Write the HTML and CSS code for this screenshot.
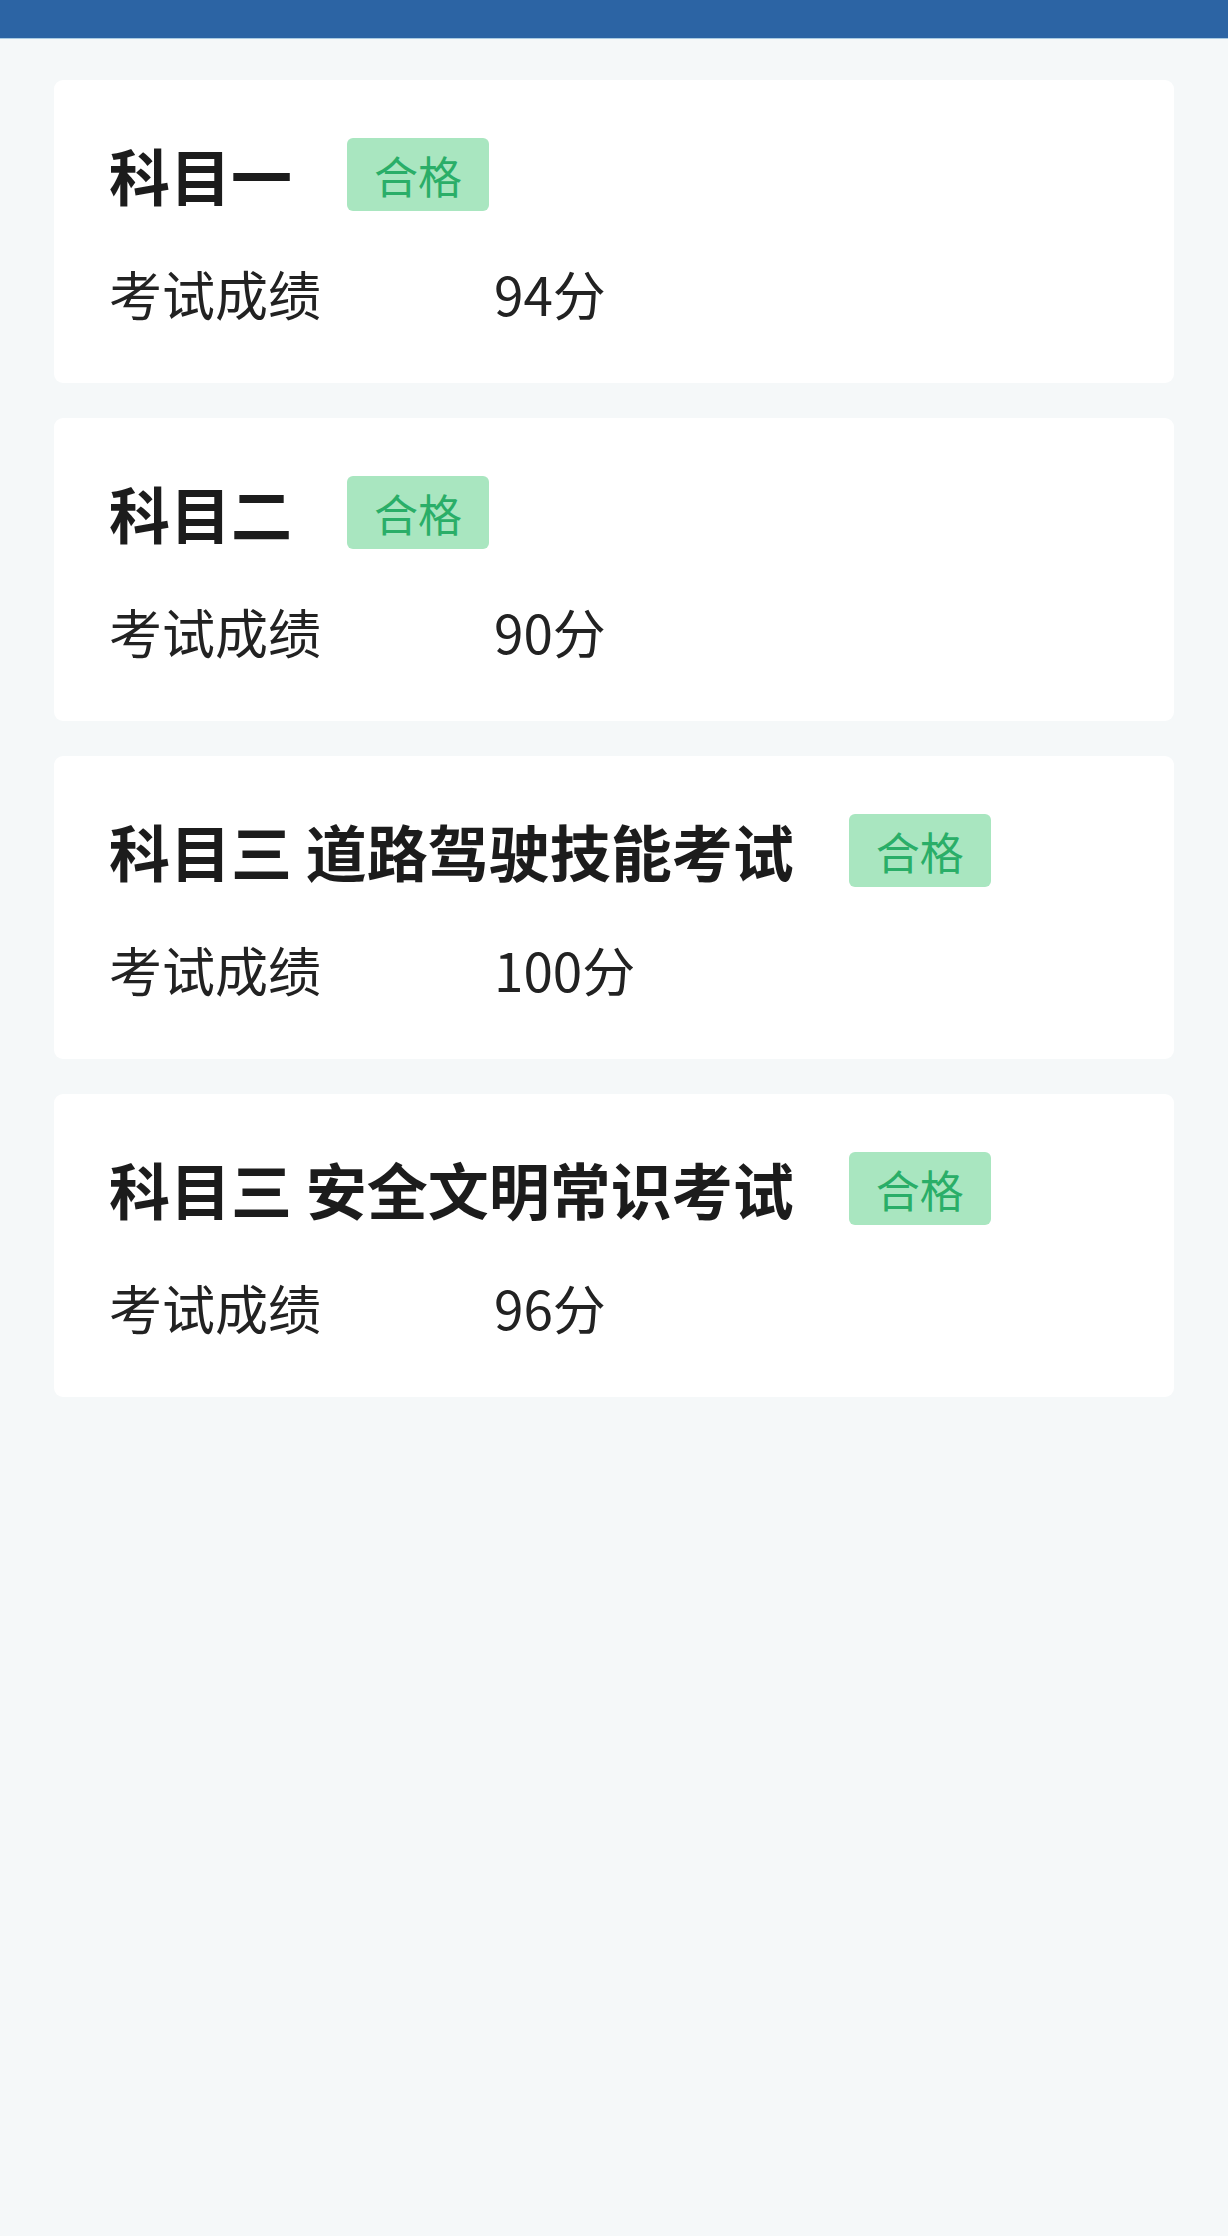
FILE: index.html
```html
<!DOCTYPE html>
<html lang="zh-CN">

<head>
    <meta charset="UTF-8">
    <meta name="viewport" content="width=device-width, initial-scale=1.0">
    <title>考试成绩</title>
    <link rel="stylesheet" href="styles.css">
</head>

<body>
    <div class="top-bar"></div>
    <div class="list">
        <div class="card">
            <div class="card-title">
                <span class="subject">科目一</span>
                <span class="tag">合格</span>
            </div>
            <div class="score-row">
                <span class="label">考试成绩</span>
                <span class="value">94分</span>
            </div>
        </div>
        <div class="card">
            <div class="card-title">
                <span class="subject">科目二</span>
                <span class="tag">合格</span>
            </div>
            <div class="score-row">
                <span class="label">考试成绩</span>
                <span class="value">90分</span>
            </div>
        </div>
        <div class="card">
            <div class="card-title">
                <span class="subject">科目三 道路驾驶技能考试</span>
                <span class="tag">合格</span>
            </div>
            <div class="score-row">
                <span class="label">考试成绩</span>
                <span class="value">100分</span>
            </div>
        </div>
        <div class="card">
            <div class="card-title">
                <span class="subject">科目三 安全文明常识考试</span>
                <span class="tag">合格</span>
            </div>
            <div class="score-row">
                <span class="label">考试成绩</span>
                <span class="value">96分</span>
            </div>
        </div>
    </div>
</body>

</html>
```

FILE: styles.css
```css
html,
body {
    margin: 0;
    padding: 0;
}

body {
    font-family: 'Noto Sans CJK SC', 'Noto Sans', sans-serif;
    background-color: #f5f8f9;
    min-height: 2236px;
}

.top-bar {
    height: 38px;
    background-color: #2c64a4;
    border-bottom: 1px solid #a9cbe3;
}

.list {
    display: flex;
    flex-direction: column;
    gap: 35px;
    padding: 41px 54px;
}

.card {
    background-color: #ffffff;
    border-radius: 9px;
    padding: 58px 55px 54px;
}

.card-title {
    display: flex;
    align-items: center;
    height: 73px;
}

.subject {
    font-size: 61px;
    font-weight: bold;
    color: #1c1c1c;
    line-height: 1;
}

.tag {
    margin-left: 55px;
    height: 73px;
    padding: 0 27px;
    display: flex;
    align-items: center;
    background-color: #a9e6c0;
    color: #2aae68;
    font-size: 44px;
    border-radius: 6px;
}

.score-row {
    display: flex;
    align-items: center;
    margin-top: 45px;
    height: 73px;
    font-size: 53px;
    color: #222;
}

.label {
    width: 385px;
}
```
